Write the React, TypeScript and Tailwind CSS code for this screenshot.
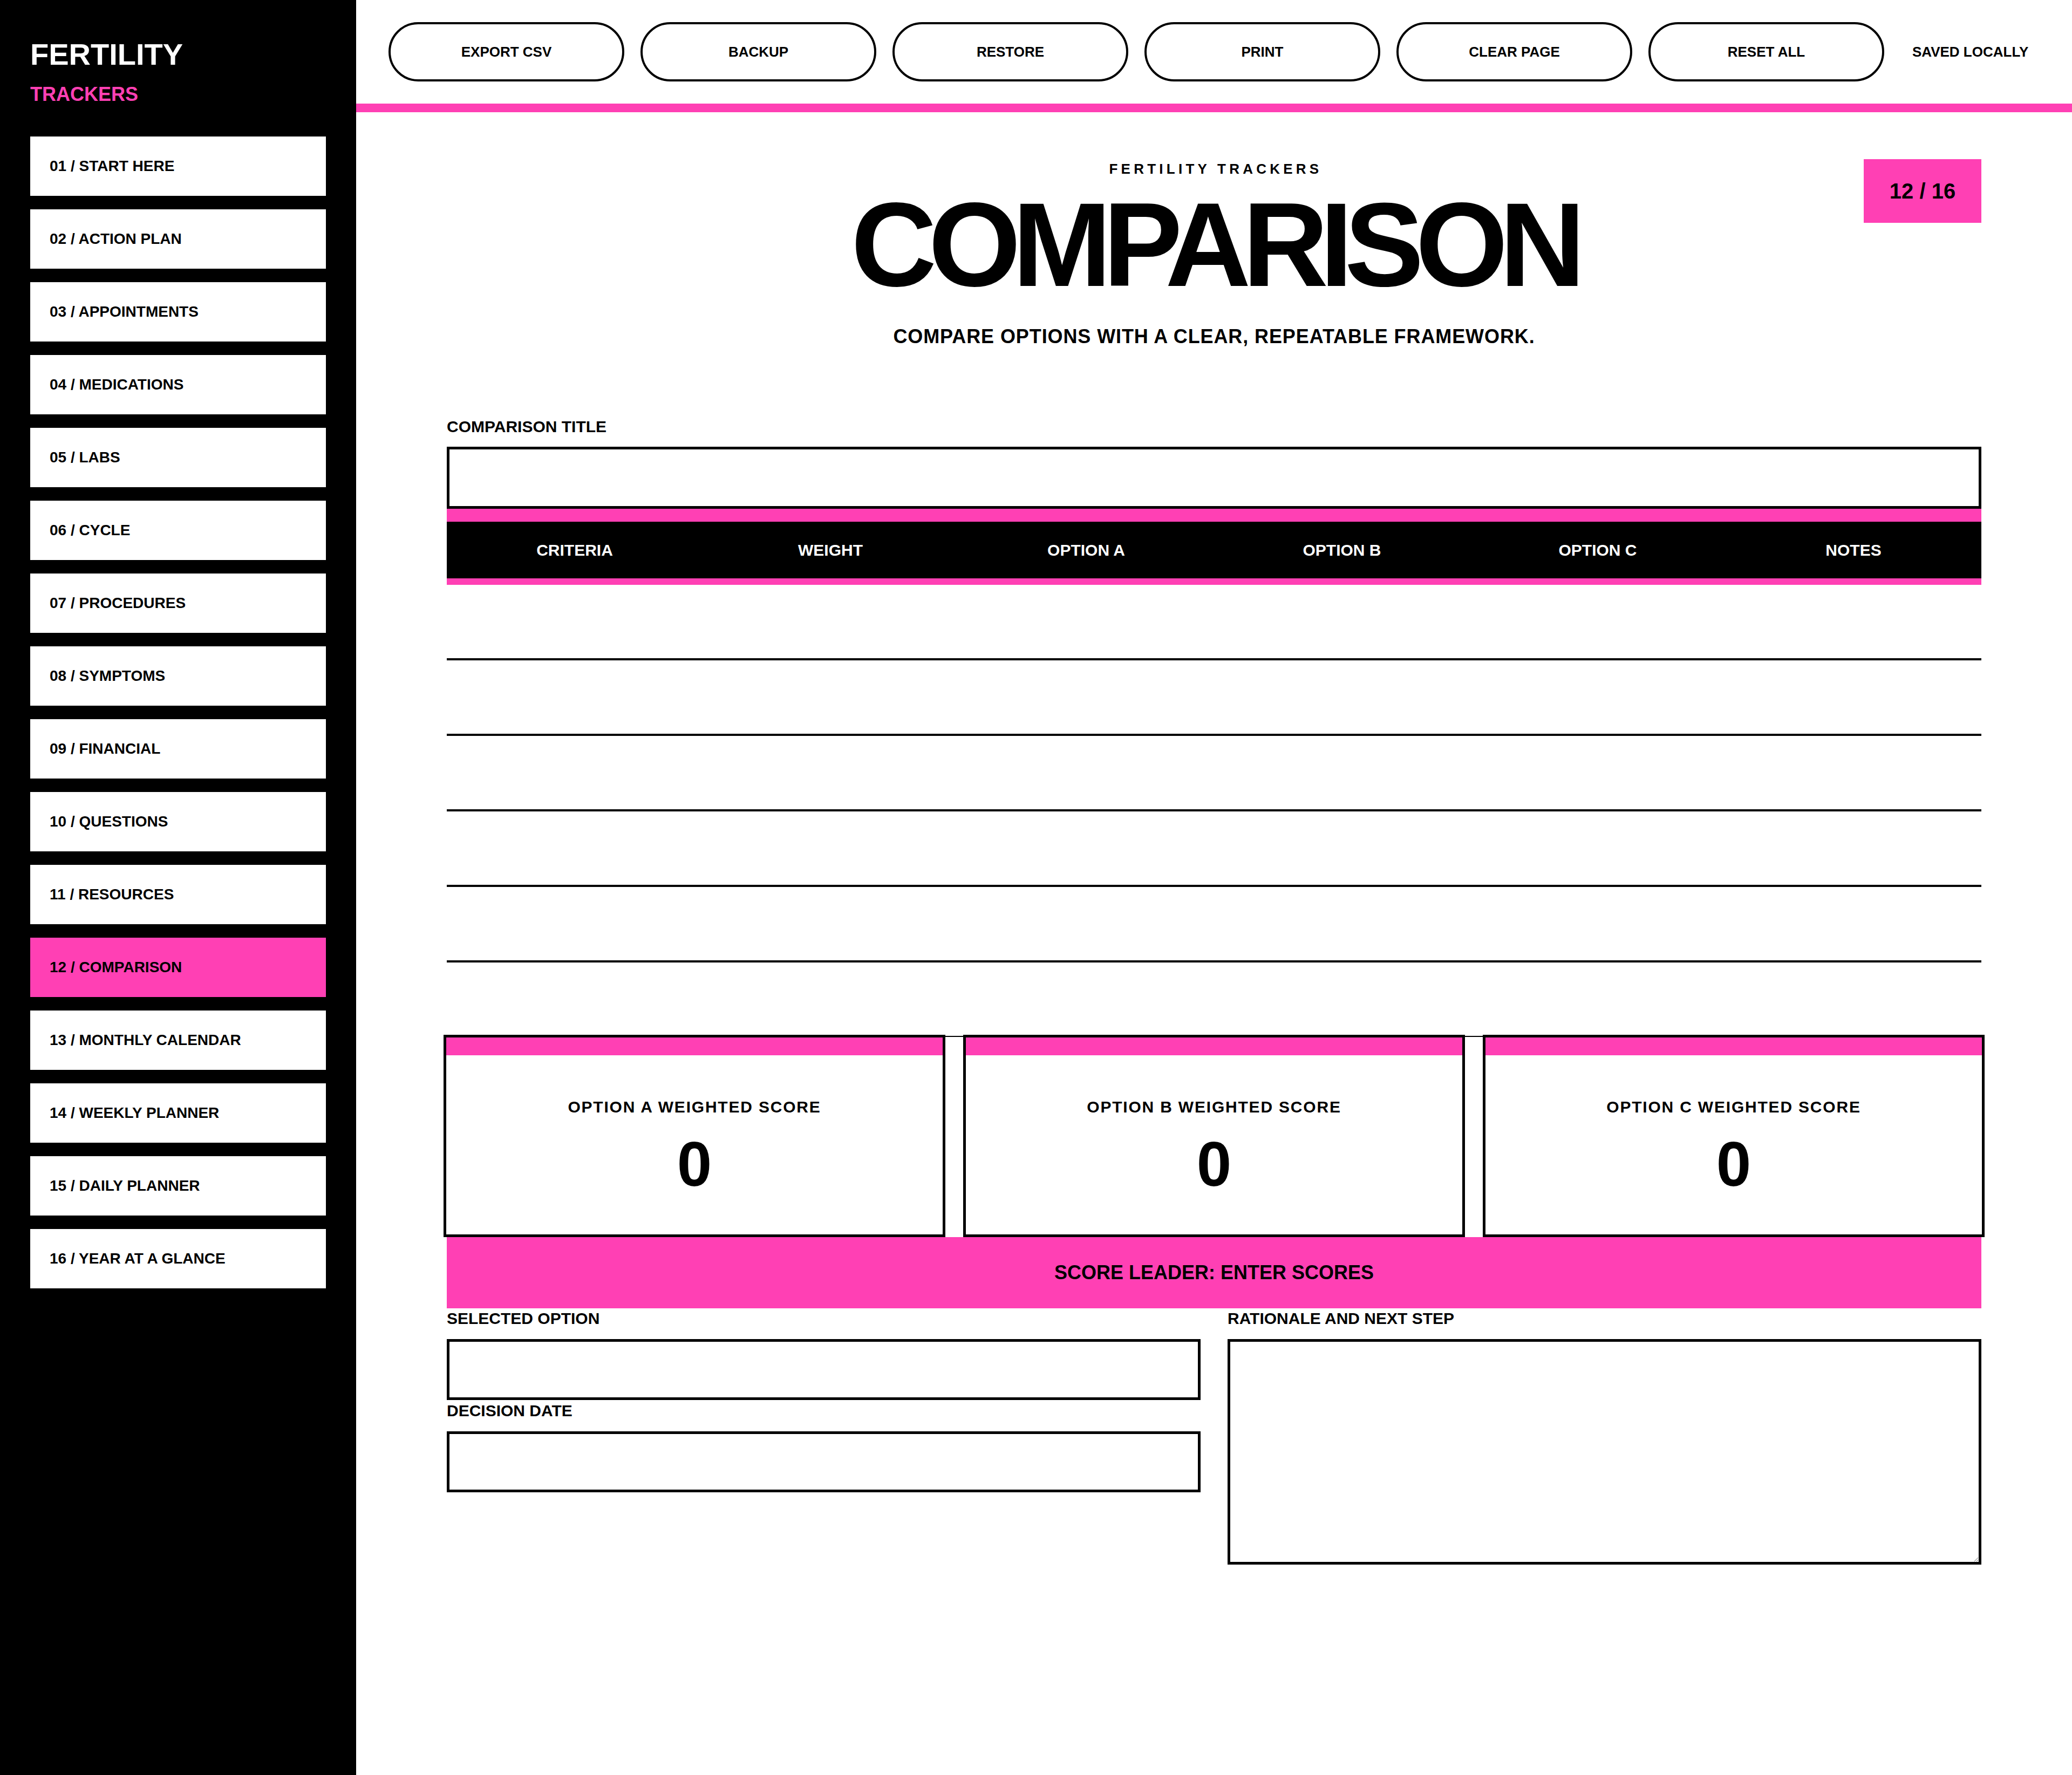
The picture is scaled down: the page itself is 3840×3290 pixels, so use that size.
import { useState } from 'react';

const navItems = [
  '01 / START HERE',
  '02 / ACTION PLAN',
  '03 / APPOINTMENTS',
  '04 / MEDICATIONS',
  '05 / LABS',
  '06 / CYCLE',
  '07 / PROCEDURES',
  '08 / SYMPTOMS',
  '09 / FINANCIAL',
  '10 / QUESTIONS',
  '11 / RESOURCES',
  '12 / COMPARISON',
  '13 / MONTHLY CALENDAR',
  '14 / WEEKLY PLANNER',
  '15 / DAILY PLANNER',
  '16 / YEAR AT A GLANCE'
];

const actions = ['EXPORT CSV', 'BACKUP', 'RESTORE', 'PRINT', 'CLEAR PAGE', 'RESET ALL'];

const columns = ['CRITERIA', 'WEIGHT', 'OPTION A', 'OPTION B', 'OPTION C', 'NOTES'];

const options = ['A', 'B', 'C'];

const App = () => {
  const [title, setTitle] = useState('');
  const [selected, setSelected] = useState('');
  const [decisionDate, setDecisionDate] = useState('');
  const [rationale, setRationale] = useState('');

  return (
    <div className="flex min-h-screen bg-white font-['Liberation_Sans',Arial,sans-serif] font-bold text-black">
      {/* Sidebar */}
      <aside className="w-[660px] shrink-0 bg-black px-[56px] pt-[73px]">
        <div className="text-[56px] leading-none text-white">FERTILITY</div>
        <div className="mt-[28px] text-[36px] leading-none text-[#ff40b4]">TRACKERS</div>
        <nav className="mt-[60px] flex flex-col gap-[25px]">
          {navItems.map((item) => (
            <a
              key={item}
              href="#"
              className={`flex h-[110px] items-center pl-[36px] text-[28px] leading-none text-black ${
                item === '12 / COMPARISON' ? 'bg-[#ff40b4]' : 'bg-white'
              }`}
            >
              {item}
            </a>
          ))}
        </nav>
      </aside>

      {/* Main */}
      <main className="min-w-0 flex-1">
        <header className="flex items-center gap-[30px] border-b-[16px] border-[#ff40b4] px-[60px] py-[41px]">
          {actions.map((label) => (
            <button
              key={label}
              type="button"
              className="flex h-[110px] w-[437px] items-center justify-center rounded-full border-[4px] border-black bg-white text-[26px] leading-none"
            >
              {label}
            </button>
          ))}
          <span className="ml-[22px] text-[26px] leading-none">SAVED LOCALLY</span>
        </header>

        <div className="px-[168px] pt-[87px] pb-[120px]">
          {/* Page heading */}
          <div className="grid grid-cols-[1fr_auto_1fr]">
            <div />
            <div className="flex flex-col items-center pt-[5px] text-center">
              <div className="pl-[6px] text-[26px] leading-none tracking-[0.24em]">FERTILITY TRACKERS</div>
              <h1 className="mt-[18px] text-[220px] leading-none tracking-[-0.07em]">COMPARISON</h1>
              <p className="mt-[42px] text-[36px] leading-none tracking-[0.025em]">
                COMPARE OPTIONS WITH A CLEAR, REPEATABLE FRAMEWORK.
              </p>
            </div>
            <div className="flex justify-end">
              <div className="flex h-[118px] w-[218px] items-center justify-center bg-[#ff40b4] text-[40px] leading-none">
                12 / 16
              </div>
            </div>
          </div>

          {/* Title */}
          <label className="mt-[134px] block text-[30px] leading-none">COMPARISON TITLE</label>
          <input
            value={title}
            onChange={(e) => setTitle(e.target.value)}
            className="mt-[22px] block h-[115px] w-full border-[5px] border-black bg-white px-[20px] text-[30px] outline-none"
          />

          {/* Table */}
          <div className="h-[24px] bg-[#ff40b4]" />
          <div className="grid h-[105px] grid-cols-6 items-center bg-black text-[30px] leading-none text-white">
            {columns.map((col) => (
              <div key={col} className="text-center">
                {col}
              </div>
            ))}
          </div>
          <div className="h-[12px] bg-[#ff40b4]" />
          {[0, 1, 2, 3, 4].map((row) => (
            <div key={row} className="grid h-[140px] grid-cols-6 border-b-[4px] border-black">
              {columns.map((col) => (
                <div key={col} />
              ))}
            </div>
          ))}

          {/* Scores */}
          <div className="relative -mx-[6px] mt-[134px] grid grid-cols-3 gap-[33px] before:absolute before:inset-x-0 before:top-[2px] before:h-[2px] before:bg-black">
            {options.map((opt) => (
              <div key={opt} className="border-[5px] border-black bg-white text-center">
                <div className="h-[33px] bg-[#ff40b4]" />
                <div className="pt-[81px] pb-[72px]">
                  <div className="text-[30px] leading-none tracking-[0.06em]">OPTION {opt} WEIGHTED SCORE</div>
                  <div className="mt-[33px] text-[116px] leading-none">0</div>
                </div>
              </div>
            ))}
          </div>
          <div className="flex h-[132px] items-center justify-center bg-[#ff40b4] text-[36px] leading-none">
            SCORE LEADER: ENTER SCORES
          </div>

          {/* Decision */}
          <div className="grid grid-cols-2 gap-x-[50px] pt-[4px]">
            <div>
              <label className="block text-[30px] leading-none">SELECTED OPTION</label>
              <input
                value={selected}
                onChange={(e) => setSelected(e.target.value)}
                className="mt-[23px] block h-[113px] w-full border-[5px] border-black bg-white px-[20px] text-[30px] outline-none"
              />
              <label className="mt-[5px] block text-[30px] leading-none">DECISION DATE</label>
              <input
                value={decisionDate}
                onChange={(e) => setDecisionDate(e.target.value)}
                className="mt-[23px] block h-[113px] w-full border-[5px] border-black bg-white px-[20px] text-[30px] outline-none"
              />
            </div>
            <div>
              <label className="block text-[30px] leading-none">RATIONALE AND NEXT STEP</label>
              <textarea
                value={rationale}
                onChange={(e) => setRationale(e.target.value)}
                className="mt-[23px] block h-[418px] w-full resize-y border-[5px] border-black bg-white p-[20px] text-[30px] outline-none"
              />
            </div>
          </div>
        </div>
      </main>
    </div>
  );
};

export default App;
